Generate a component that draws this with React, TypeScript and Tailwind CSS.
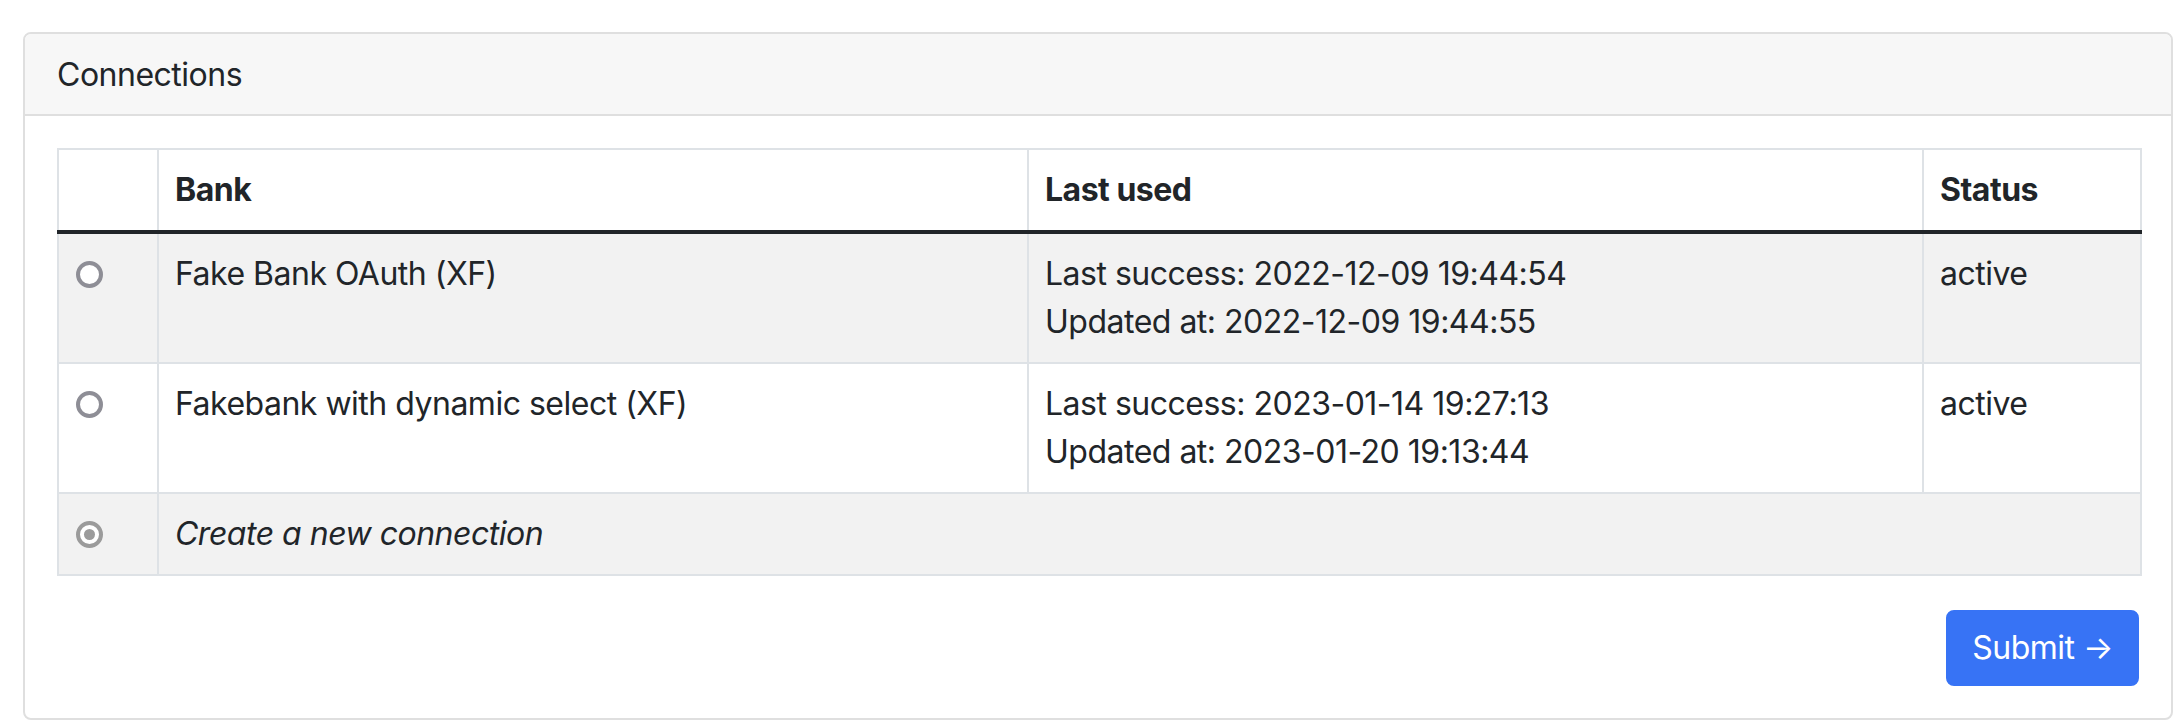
import React, { useState } from 'react';

interface Connection {
  bank: string;
  lastSuccess: string;
  updatedAt: string;
  status: string;
}

const connections: Connection[] = [
  { bank: 'Fake Bank OAuth (XF)', lastSuccess: '2022-12-09 19:44:54', updatedAt: '2022-12-09 19:44:55', status: 'active' },
  { bank: 'Fakebank with dynamic select (XF)', lastSuccess: '2023-01-14 19:27:13', updatedAt: '2023-01-20 19:13:44', status: 'active' },
];

const Radio: React.FC<{ checked: boolean; onClick: () => void }> = ({ checked, onClick }) => (
  <button
    type="button"
    onClick={onClick}
    className={`mt-[11px] ml-[1px] w-[27px] h-[27px] rounded-full bg-white flex items-center justify-center border-[4px] ${
      checked ? 'border-[#9b9b9b]' : 'border-[#8e8e96]'
    }`}
  >
    {checked && <span className="block w-[11px] h-[11px] rounded-full bg-[#9b9b9b]" />}
  </button>
);

export default function App() {
  const [selected, setSelected] = useState(-1);

  const cell = 'border-2 border-[#dee2e6] px-[16px] py-[16px] align-top';

  return (
    <div className="min-h-screen bg-white pl-[23px] pt-[32px] text-[#212529] tracking-[-0.5px] font-['Inter','Liberation_Sans',sans-serif]">
      <div className="w-[2150px] border-2 border-[#dfdfdf] rounded-[8px] overflow-hidden">
        {/* Header */}
        <div className="bg-[#f7f7f7] border-b-2 border-[#dfdfdf] px-[32px] pt-[17px] pb-[15px] text-[32px] leading-[48px]">
          Connections
        </div>

        {/* Body */}
        <div className="p-[32px]">
          <table className="w-[2083px] table-fixed border-collapse text-[32px] leading-[48px] mb-[34px]">
            <colgroup>
              <col className="w-[100px]" />
              <col className="w-[870px]" />
              <col className="w-[895px]" />
              <col className="w-[218px]" />
            </colgroup>
            <thead>
              <tr className="text-left">
                <th className={`${cell} border-b-4 border-b-[#212529]`} />
                <th className={`${cell} border-b-4 border-b-[#212529] font-bold`}>Bank</th>
                <th className={`${cell} border-b-4 border-b-[#212529] font-bold`}>Last used</th>
                <th className={`${cell} border-b-4 border-b-[#212529] font-bold`}>Status</th>
              </tr>
            </thead>
            <tbody>
              {connections.map((c, i) => (
                <tr key={c.bank} className={i % 2 === 0 ? 'bg-[#f2f2f2]' : 'bg-white'}>
                  <td className={cell}>
                    <Radio checked={selected === i} onClick={() => setSelected(i)} />
                  </td>
                  <td className={cell}>{c.bank}</td>
                  <td className={cell}>
                    <div>Last success: {c.lastSuccess}</div>
                    <div>Updated at: {c.updatedAt}</div>
                  </td>
                  <td className={cell}>{c.status}</td>
                </tr>
              ))}
              <tr className="bg-[#f2f2f2]">
                <td className={cell}>
                  <Radio checked={selected === -1} onClick={() => setSelected(-1)} />
                </td>
                <td className={`${cell} italic`} colSpan={3}>
                  Create a new connection
                </td>
              </tr>
            </tbody>
          </table>

          <div className="flex justify-end">
            <button
              type="button"
              className="bg-[#3773f5] border-2 border-[#3773f5] text-white text-[32px] leading-[48px] px-[24px] py-[12px] rounded-[8px]"
            >
              Submit →
            </button>
          </div>
        </div>
      </div>
    </div>
  );
}
